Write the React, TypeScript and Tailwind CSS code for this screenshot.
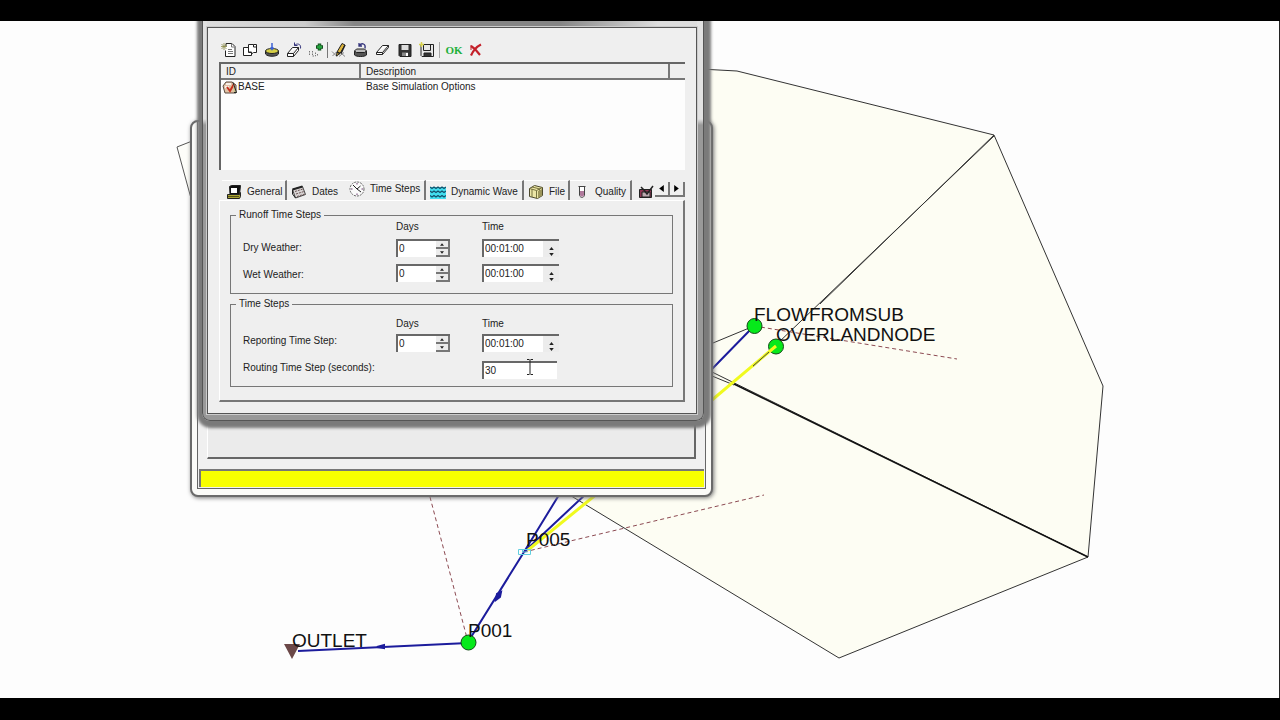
import type { ReactNode } from "react";

const Icon = ({ children }: { children: ReactNode }) => (
  <svg viewBox="0 0 16 16" className="h-4 w-4 shrink-0" fill="none" stroke="#222" aria-hidden="true">
    {children}
  </svg>
);

const NewIcon = () => (
  <Icon>
    <path d="M6 4.500V1.500h6l3 3v10H5.500v-6" fill="#fff" />
    <path d="M11.500 1.500v3.500h3M8 7.500h4M8 9.500h5M8 11.500h5" stroke="#777" />
    <path d="M4 1v7M1 4.500h6M1.500 2l5 5M6.500 2l-5 5" stroke="#8d8d4a" strokeWidth=".8" />
  </Icon>
);

const CopyIcon = () => (
  <Icon>
    <path d="M6.500 2.500h5l3 0v8h-3l-2 1.500v-2h-3z" fill="#fff" />
    <path d="M1.500 5.500h5v5h3v3h-8z" fill="#fff" />
    <path d="M11.500 2.500v2.500h3" />
  </Icon>
);

const ImportIcon = () => (
  <Icon>
    <path d="M1.500 9v3c2 3 11 3 13 0V9" fill="#555" />
    <ellipse cx="8" cy="9" rx="6.500" ry="2.500" fill="#d6cf45" />
    <path d="M8 1v6M6.500 5.500L8 7.500l1.500-2" stroke="#3c62d4" strokeWidth="1.500" />
  </Icon>
);

const EraseBackIcon = () => (
  <Icon>
    <path d="M1.500 11.500l5-6h6l-5 6zM1.500 11.500v3h6l5-6v-3M7.500 11.500v3" fill="#fff" />
    <path d="M8.500 3.500c2-2.500 7-2 6 3M8.500 .5v3h3" stroke="#34347c" />
  </Icon>
);

const IdAddIcon = () => (
  <Icon>
    <path d="M1.500 9v5M4.500 9v5h3V9.500M9.500 12v2" stroke="#777" strokeDasharray="1.500 1" />
    <path d="M11.500 1.500v7M8 5h7" stroke="#124d1c" strokeWidth="3.500" />
    <path d="M11.500 2.500v5M9 5h5" stroke="#23a13c" strokeWidth="2" />
  </Icon>
);

const PencilIcon = () => (
  <Icon>
    <path d="M1 9.500l5 5M1.500 14l4-4M8 14.500l5-4M10 11l4 3.500" stroke="#888" />
    <path d="M6 10l5-8.500 3 1.500-5 8.500-3.500 2.500z" fill="#dfb63c" />
    <path d="M10 11.500l4-8.500M6 10l3 1.500" strokeWidth="1.500" />
  </Icon>
);

const RestoreIcon = () => (
  <Icon>
    <path d="M1.500 9v4c2 2 10 2 12 0V9" fill="#555" />
    <path d="M1.500 9l2-2h8l2 2-2 1.500h-8z" fill="#bbb" />
    <path d="M6 3.500c3-3 7-2 6 3M6 1v3h3" stroke="#34347c" strokeWidth="1.300" />
  </Icon>
);

const EraserIcon = () => (
  <Icon>
    <path d="M1.500 10.500l6-7h6l-6 7zM1.500 10.500v2h6l6-7v-2M7.500 10.500v2" fill="#fff" />
  </Icon>
);

const SaveIcon = () => (
  <Icon>
    <path d="M2 2.500h12v12H3l-1-1z" fill="#333" />
    <path d="M4.500 3h7v5h-7z" fill="#ddd" stroke="none" />
    <path d="M5 10.500h6V14H5z" fill="#888" stroke="none" />
    <path d="M9 11h2v3H9z" fill="#fff" stroke="none" />
  </Icon>
);

const SaveAsIcon = () => (
  <Icon>
    <path d="M2 2.500h12.500v12H3l-1-1z" fill="#e8e8e8" />
    <path d="M4.500 3v5.500h7V3" />
    <path d="M5 11h7v3.500H5z" fill="#333" />
    <path d="M2.500 0v5M0 2.500h5" stroke="#d8d24a" strokeWidth="1.500" />
  </Icon>
);

const CancelIcon = () => (
  <Icon>
    <path d="M3 4l4 3 5 6M13 2.500C8 5 5 9 3 13.500" stroke="#c4202a" strokeWidth="2.200" />
    <path d="M3 3v5" stroke="#c4202a" />
  </Icon>
);

const ScenarioIcon = () => (
  <Icon>
    <path d="M1 7l3-4h6l4 3v8H3z" fill="#e2c3a6" stroke="#5a4a40" />
    <path d="M4 5h5M3 8h4" stroke="#fff" strokeWidth="1.500" />
    <path d="M5 8l3 4 4-7" stroke="#c62f1d" strokeWidth="2" />
    <path d="M11 3.500l3.500 10H12" fill="#c9c28b" stroke="#222" />
  </Icon>
);

const GeneralIcon = () => (
  <Icon>
    <path d="M3.500 2.500l2-1h9l-1 9H4z" fill="#111" />
    <path d="M5 4h6v5H5z" fill="#fff" stroke="none" />
    <path d="M1.500 10.500h12l1-2v4l-1 2h-12z" fill="#a9a332" />
    <path d="M2 12.500h11" stroke="#57531a" />
  </Icon>
);

const DatesIcon = () => (
  <Icon>
    <path d="M1.500 5.500l10-3 3 8-10 3.500z" fill="#d7d3d3" stroke="#444" />
    <path d="M1.500 5.500l10-3" strokeWidth="2" />
    <path d="M4 7.500l8-2.500M5 10l8-2.500M6 12.500l8-2.500" stroke="#6b5454" strokeDasharray="2 1" />
    <path d="M1.500 6v4l3 4" />
  </Icon>
);

const ClockIcon = () => (
  <Icon>
    <circle cx="8" cy="8" r="7" fill="#fafafa" stroke="#666" strokeDasharray="2 1" />
    <path d="M4 4l4 4 3.500-3M8 8l4 3" stroke="#222" />
    <path d="M8 2v1.500M8 12.500V14M2 8h1.500M12.500 8H14" stroke="#6e3d70" />
  </Icon>
);

const WaveIcon = () => (
  <Icon>
    <path d="M0 3h16v12H0z" fill="#43dff0" stroke="none" />
    <path d="M0 3l2 1.500L4 3l2 1.500L8 3l2 1.500L12 3l2 1.500L16 3M0 7l2 1.500L4 7l2 1.500L8 7l2 1.500L12 7l2 1.500L16 7M0 11.500L2 13l2-1.500L6 13l2-1.500 2 1.500 2-1.500 2 1.500 2-1.500" stroke="#14506a" strokeWidth="1.300" />
  </Icon>
);

const FileIcon = () => (
  <Icon>
    <path d="M1.500 4.500l5-3 8 2v8l-5 3-8-2z" fill="#ece6a6" stroke="#4d4a2e" />
    <path d="M1.500 4.500l7 2v8M8.500 6.500l6-3M4 5v8M11.500 5v8M4 3l8 2" stroke="#77733f" />
    <path d="M10 7v7l4-2.500V5z" fill="#9c955a" stroke="none" />
  </Icon>
);

const QualityIcon = () => (
  <Icon>
    <path d="M4.500 2.500h7M5.500 2.500v9c1 2.500 4 2.500 5 0v-9" fill="#fff" stroke="#444" />
    <path d="M6 7h4v4.500c-1 1.500-3 1.500-4 0z" fill="#b07a9c" stroke="none" />
  </Icon>
);

const ReportIcon = () => (
  <Icon>
    <path d="M1.500 5.500h12v8h-12z" fill="#8f3654" />
    <path d="M4 8h8v5H4z" fill="#bcaab0" stroke="#222" />
    <path d="M6 6l3 4 6-8M3 3l3 3" strokeWidth="1.500" />
  </Icon>
);

const toolGroups = [
  [
    { name: "New", icon: <NewIcon /> },
    { name: "Clone", icon: <CopyIcon /> },
    { name: "Import", icon: <ImportIcon /> },
    { name: "Delete", icon: <EraseBackIcon /> },
    { name: "Edit ID", icon: <IdAddIcon /> },
  ],
  [
    { name: "Edit", icon: <PencilIcon /> },
    { name: "Restore", icon: <RestoreIcon /> },
    { name: "Clear", icon: <EraserIcon /> },
    { name: "Save", icon: <SaveIcon /> },
    { name: "Save as", icon: <SaveAsIcon /> },
  ],
];

const tabs = [
  { label: "General", icon: <GeneralIcon />, width: "w-[65px]" },
  { label: "Dates", icon: <DatesIcon />, width: "w-[58px]" },
  { label: "Time Steps", icon: <ClockIcon />, width: "w-[81px]", active: true },
  { label: "Dynamic Wave", icon: <WaveIcon />, width: "w-[98px]" },
  { label: "File", icon: <FileIcon />, width: "w-[46px]" },
  { label: "Quality", icon: <QualityIcon />, width: "w-[62px]" },
];

const Spinner = ({ label, flat }: { label: string; flat?: boolean }) => (
  <span className={`flex flex-col bg-[#ececec] ${flat ? "w-4 pt-1" : "w-[14px]"}`}>
    {["up", "down"].map((dir) => (
      <button
        key={dir}
        aria-label={`${label} ${dir}`}
        className={`flex flex-1 items-center justify-center ${flat ? "" : "border-r-2 border-b-2 border-[#777]"}`}
      >
        <svg viewBox="0 0 6 4" className={flat ? "h-[3px] w-[5px]" : "h-[3px] w-1"}>
          <path d={dir === "up" ? "M0 4h6L3 0z" : "M0 0h6L3 4z"} fill="#222" />
        </svg>
      </button>
    ))}
  </span>
);

const Field = ({ label, value, width, spin, flat }: { label: string; value: string; width: string; spin?: boolean; flat?: boolean }) => (
  <span className={`flex h-[18px] border-t-2 border-l-2 border-[#686868] bg-white ${width}`}>
    <input aria-label={label} defaultValue={value} className="min-w-0 flex-1 pl-px outline-none" />
    {spin && <Spinner label={label} flat={flat} />}
  </span>
);

const cols = "grid grid-cols-[153px_86px_77px] pl-3";

const ColumnHeads = () => (
  <div className={`${cols} leading-3`}>
    <span className="col-start-2">Days</span>
    <span>Time</span>
  </div>
);

const StepRow = ({ label, align = "items-center" }: { label: string; align?: string }) => (
  <div className={`${cols} ${align}`}>
    <span>{label}</span>
    <Field label={`${label} days`} value="0" width="w-[54px]" spin />
    <Field label={`${label} time`} value="00:01:00" width="w-[77px]" spin flat />
  </div>
);

const NetworkMap = () => (
  <svg
    viewBox="0 21 1280 677"
    preserveAspectRatio="xMinYMin meet"
    className="absolute inset-0 h-full w-full font-['Liberation_Sans',Arial,sans-serif] text-[19px]"
    fill="none"
  >
    <path d="M568 494L600 69h104l33 2 257 64 109 251-15 171-249 101z" fill="#fdfdf3" />
    <path d="M220 130l-43 17 30 110z" fill="#fdfdf9" stroke="#555" />
    <g stroke="#333">
      <path d="M700 69l37 2 257 64 109 251-15 171-249 101-271-164" />
      <path d="M994 135L820 304M994 136L753 367M712 372l376 185M712 376l22 9M713 343l41-17" />
      <path d="M734 384l354 173" strokeWidth="1.500" stroke="#111" />
    </g>
    <g stroke="#8c4a52" strokeDasharray="4 3">
      <path d="M754 326l203 33M524 552l240-57M430 497l38 145" />
    </g>
    <g stroke="#1c1c9c" strokeWidth="2">
      <path d="M712 369l42-43M524 552l38-62M524 552l64-60M468 642l56-90M298 651l170-8" />
      <path d="M496 600l1-6 4-2-1 5zM377 647l7-2v3z" fill="#1c1c9c" />
    </g>
    <circle cx="754.500" cy="326" r="7.500" fill="#06e91a" stroke="#134a16" />
    <circle cx="776" cy="346.500" r="7.500" fill="#06e91a" stroke="#134a16" />
    <circle cx="468.500" cy="642.500" r="7.500" fill="#06e91a" stroke="#134a16" />
    <path d="M712 400l64-54M528 550l70-57" stroke="#f0fa1e" strokeWidth="3" />
    <path d="M753 366l16-14" stroke="#444" />
    <path d="M284 644h16l-8 15z" fill="#6b4848" />
    <path d="M518.500 549.500h12v5h-12zM522.500 549v3h5" stroke="#62cfe0" />
    <g fill="#111">
      <text x="754" y="321">FLOWFROMSUB</text>
      <text x="776" y="341">OVERLANDNODE</text>
      <text x="526" y="546">P005</text>
      <text x="468" y="637">P001</text>
      <text x="292" y="647">OUTLET</text>
    </g>
  </svg>
);

const StatusWindow = () => (
  <div className="absolute top-[99px] left-[190px] flex h-[377px] w-[523px] flex-col rounded-lg border-2 border-[#6a6a6a] bg-[#fbfbf8] px-[5px] pb-[6px] shadow-[1px_1px_4px_#777]">
    <div className="flex flex-1 flex-col border border-t-0 border-[#666] bg-[#f0f0f0] px-px pb-px">
      <div className="mx-2 flex-1 border-r-2 border-b-2 border-l border-[#666] border-l-white bg-[#ebebeb]"></div>
      <div className="mt-[10px] h-[18px] border-t-2 border-l-2 border-[#777] bg-[#f8ff00]"></div>
    </div>
  </div>
);

const OptionsDialog = () => (
  <div className="absolute top-0 left-[202px] flex h-[400px] w-[502px] flex-col rounded-b-lg border border-t-0 border-[#555] bg-[linear-gradient(#e2e2e2_0,#e2e2e2_98px,#999_104px,#999_100%)] pr-[6px] pb-[6px] pl-1 shadow-[1px_1px_3px_6px_#7a7a7a]">
    <div className="h-[6px] bg-[linear-gradient(90deg,#ddd_0,#ccc_20%,#858585_30%,#858585_72%,#ddd_92%)]"></div>
    <div className="flex flex-1 flex-col border border-[#555] bg-[#efefef] px-[11px] shadow-[0_0_0_1px_#ccc]">
      {/* toolbar */}
      <div className="-ml-0.5 flex h-[34px] items-center pt-[10px]">
        {toolGroups.map((group, i) => (
          <div key={i} className={`flex ${i > 0 ? "border-l border-[#777]" : ""}`}>
            {group.map((tool) => (
              <button key={tool.name} aria-label={tool.name} className="flex w-[22px] justify-center">
                {tool.icon}
              </button>
            ))}
          </div>
        ))}
        <div className="ml-px flex items-center border-l border-[#aaa] pl-[3px]">
          <button className="w-[22px] text-center font-['Liberation_Serif',serif] text-[11px] font-bold text-[#1fb03a]">OK</button>
          <button aria-label="Cancel" className="flex w-[22px] justify-center">
            <CancelIcon />
          </button>
        </div>
      </div>

      <div className="h-[108px] border-t-2 border-l-2 border-[#666] bg-[#fdfdfd]">
        <table className="w-full table-fixed border-collapse text-left">
          <thead>
            <tr className="h-[15px] border-b-2 border-[#777] bg-[#efefef] leading-[13px]">
              <th className="w-[139px] border-r-2 border-[#777] pl-[5px] font-normal">ID</th>
              <th className="border-r-2 border-[#777] pl-[5px] font-normal">Description</th>
              <th className="w-4"></th>
            </tr>
          </thead>
          <tbody>
            <tr className="h-[14px] leading-[14px]">
              <td>
                <span className="flex h-[14px] items-center pl-px">
                  <ScenarioIcon />
                  BASE
                </span>
              </td>
              <td className="pl-[6px]">Base Simulation Options</td>
              <td></td>
            </tr>
          </tbody>
        </table>
      </div>

      <div className="mt-[10px] flex h-5 items-stretch pl-[3px]" role="tablist">
        {tabs.map((tab) => (
          <button
            key={tab.label}
            role="tab"
            aria-selected={!!tab.active}
            className={`flex items-center gap-[5px] border-t border-t-white pl-1 whitespace-nowrap ${tab.width} ${
              tab.active ? "pb-1" : "pt-[3px]"
            } ${tab.label === "Dates" ? "" : "border-r-2 border-r-[#777]"}`}
          >
            {tab.icon}
            {tab.label}
          </button>
        ))}
        <span className="flex w-[22px] items-center justify-end pt-[3px]">
          <ReportIcon />
        </span>
        <span className="ml-px flex h-[17px] pt-[2px]">
          {["M5 0v6L1 3z", "M1 0v6l4-3z"].map((d, i) => (
            <button key={d} aria-label={i ? "Next tab" : "Previous tab"} className="flex w-[15px] items-center justify-center border-r-2 border-b-2 border-[#777]">
              <svg viewBox="0 0 6 6" className="h-[7px] w-[7px]">
                <path d={d} fill="#000" />
              </svg>
            </button>
          ))}
        </span>
      </div>

      <div className="mb-[11px] flex-1 border-t border-r-2 border-b-2 border-l border-[#777] border-t-white border-l-white px-[10px] pt-2">
        <fieldset className="border border-[#777] pb-[11px]">
          <legend className="ml-[5px] px-[3px] leading-3">Runoff Time Steps</legend>
          <ColumnHeads />
          <div className="flex flex-col gap-[7px] pt-[6px]">
            <StepRow label="Dry Weather:" />
            <StepRow label="Wet Weather:" align="items-end" />
          </div>
        </fieldset>
        <fieldset className="mt-1 border border-[#777] pb-[7px]">
          <legend className="ml-[5px] px-[3px] leading-3">Time Steps</legend>
          <div className="pt-2">
            <ColumnHeads />
          </div>
          <div className="flex flex-col gap-[9px] pt-1">
            <StepRow label="Reporting Time Step:" align="items-start" />
            <div className={`${cols} items-start`}>
              <span className="col-span-2">Routing Time Step (seconds):</span>
              <span className="relative">
                <Field label="Routing Time Step (seconds)" value="30" width="w-[75px]" />
                <svg viewBox="0 0 8 16" className="absolute -top-0.5 left-[44px] h-4 w-2" fill="none" stroke="#222">
                  <path d="M1 .5h2.500M4.500 .5H7M4 1v14M1 15.500h2.500M4.500 15.500H7" />
                </svg>
              </span>
            </div>
          </div>
        </fieldset>
      </div>
    </div>
  </div>
);

const App = () => {
  return (
    <div className="flex h-screen flex-col bg-black">
      <main className="relative mt-[21px] mb-[22px] flex-1 overflow-hidden bg-[#fdfdfd] font-['Liberation_Sans',Arial,sans-serif] text-[10px] leading-[14px] text-[#222] shadow-[inset_-1px_0_#222]">
        <NetworkMap />
        <StatusWindow />
        <OptionsDialog />
      </main>
    </div>
  );
};

export default App;
